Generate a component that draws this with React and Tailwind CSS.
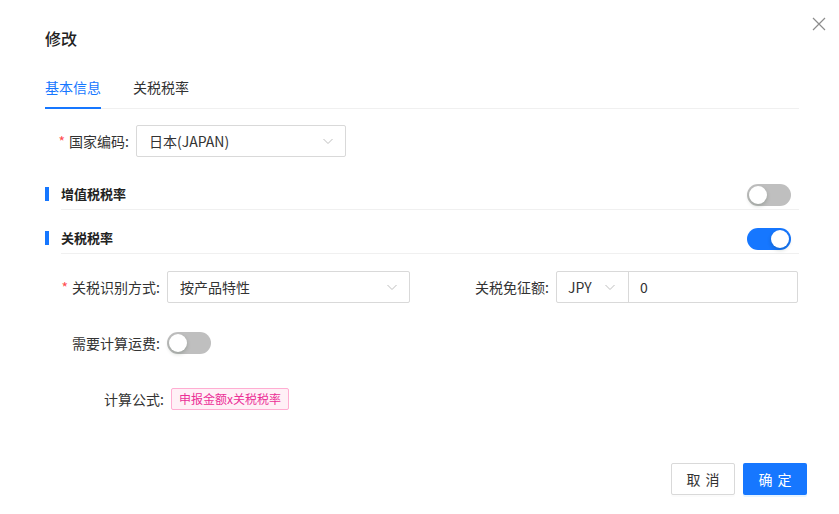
import { useState } from 'react';

const Chevron = () => (
  <svg width="12" height="12" viewBox="0 0 12 12" fill="none" className="shrink-0">
    <path d="M1.5 4l4.5 4.5L10.5 4" stroke="#bfbfbf" strokeWidth="1" />
  </svg>
);

const Toggle = ({ on, onClick }) => (
  <button
    onClick={onClick}
    className={`relative w-[44px] h-[22px] rounded-full shrink-0 ${on ? 'bg-[#1677ff]' : 'bg-[#bfbfbf]'}`}
  >
    <span
      className={`absolute top-[2px] w-[18px] h-[18px] rounded-full bg-white shadow-[0_2px_4px_rgba(0,35,11,0.2)] ${on ? 'left-[24px]' : 'left-[2px]'}`}
    />
  </button>
);

const Label = ({ text, required, width }) => (
  <div className={`flex items-center justify-end shrink-0 pr-[7px] text-[14px] text-[#333] ${width}`}>
    {required && <span className="text-[#ff4d4f] mr-[4px] text-[14px]">*</span>}
    <span>{text}:</span>
  </div>
);

const Section = ({ title, on, onClick }) => (
  <div className="flex items-center">
    <div className="w-[4px] h-[14px] bg-[#1677ff] shrink-0" />
    <div className="flex-1 ml-[12px] h-[32px] flex items-center justify-between border-b border-[#f0f0f0]">
      <span className="text-[13px] font-bold text-[#222]">{title}</span>
      <div className="mr-[8px] mt-[3px] flex">
        <Toggle on={on} onClick={onClick} />
      </div>
    </div>
  </div>
);

export default function App() {
  const [vat, setVat] = useState(false);
  const [tariff, setTariff] = useState(true);
  const [freight, setFreight] = useState(false);

  return (
    <div className="relative w-[839px] h-[514px] bg-white font-['Noto_Sans_CJK_SC',sans-serif] text-[#333]">
      <button className="absolute left-[812px] top-[17px] w-[14px] h-[14px]">
        <svg width="14" height="14" viewBox="0 0 14 14" fill="none">
          <path d="M1 1l12 12M13 1L1 13" stroke="#8c8c8c" strokeWidth="1.2" />
        </svg>
      </button>

      <div className="pl-[45px] pr-[40px]">
        <div className="pt-[26px] h-[51px] text-[16px] leading-[24px] font-medium text-[#222]">修改</div>

        <div className="flex gap-[32px] mt-[25px] border-b border-[#f0f0f0]">
          <div className="text-[14px] leading-[22px] pb-[9px] text-[#1677ff] border-b-2 border-[#1677ff] -mb-px">基本信息</div>
          <div className="text-[14px] leading-[22px] pb-[9px] text-[#333]">关税税率</div>
        </div>

        <div className="flex items-center mt-[16px]">
          <Label text="国家编码" required width="w-[91px]" />
          <div className="w-[210px] h-[32px] border border-[#d9d9d9] rounded-[2px] flex items-center justify-between pl-[12px] pr-[11px] text-[14px] text-[#333]">
            <span>日本(JAPAN)</span>
            <Chevron />
          </div>
        </div>

        <div className="mt-[21px]">
          <Section title="增值税税率" on={vat} onClick={() => setVat(!vat)} />
        </div>
        <div className="mt-[12px]">
          <Section title="关税税率" on={tariff} onClick={() => setTariff(!tariff)} />
        </div>

        <div className="flex mt-[17px]">
          <div className="flex items-center w-[377px]">
            <Label text="关税识别方式" required width="w-[122px]" />
            <div className="w-[243px] h-[32px] border border-[#d9d9d9] rounded-[2px] flex items-center justify-between pl-[12px] pr-[11px] text-[14px] text-[#333]">
              <span>按产品特性</span>
              <Chevron />
            </div>
          </div>
          <div className="flex items-center">
            <Label text="关税免征额" width="w-[134px]" />
            <div className="w-[242px] h-[32px] border border-[#d9d9d9] rounded-[2px] flex items-center text-[14px] text-[#333]">
              <div className="w-[72px] h-full border-r border-[#d9d9d9] flex items-center justify-between pl-[11px] pr-[12px]">
                <span>JPY</span>
                <Chevron />
              </div>
              <span className="pl-[11px]">0</span>
            </div>
          </div>
        </div>

        <div className="flex items-center h-[32px] mt-[24px]">
          <Label text="需要计算运费" width="w-[122px]" />
          <Toggle on={freight} onClick={() => setFreight(!freight)} />
        </div>

        <div className="flex items-center h-[32px] mt-[24px]">
          <Label text="计算公式" width="w-[126px]" />
          <span className="h-[22px] px-[7px] flex items-center border border-[#ffadd2] bg-[#fff0f6] text-[#eb2f96] text-[12px] rounded-[2px]">
            申报金额x关税税率
          </span>
        </div>
      </div>

      <div className="absolute right-[32px] bottom-[19px] flex gap-[8px]">
        <button className="w-[64px] h-[32px] border border-[#d9d9d9] rounded-[2px] bg-white text-[14px] text-[#333] flex items-center justify-center shadow-[0_2px_0_rgba(0,0,0,0.016)]">
          取<span className="inline-block w-[5px]" />消
        </button>
        <button className="w-[64px] h-[32px] rounded-[2px] bg-[#1677ff] text-[14px] text-white flex items-center justify-center shadow-[0_2px_0_rgba(5,145,255,0.1)]">
          确<span className="inline-block w-[5px]" />定
        </button>
      </div>
    </div>
  );
}
